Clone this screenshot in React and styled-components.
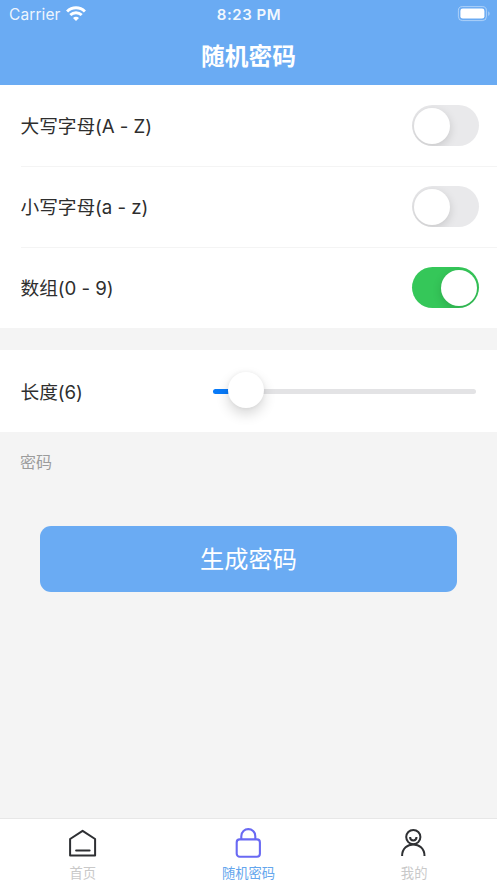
import React, { useState } from "react";
import styled, { createGlobalStyle } from "styled-components";

const GlobalStyle = createGlobalStyle`
  *, *::before, *::after { box-sizing: border-box; }
  body {
    margin: 0;
    background: #f4f4f4;
    font-family: Inter, "Noto Sans CJK SC", sans-serif;
  }
`;

const Screen = styled.div`
  display: flex;
  flex-direction: column;
  width: 497px;
  height: 883px;
  overflow: hidden;
  background: #f4f4f4;
  color: #2e2e2e;
`;

const Header = styled.header`
  height: 85px;
  flex: none;
  background: #6aabf3;
  color: #fff;
`;

const StatusBar = styled.div`
  display: grid;
  grid-template-columns: 1fr auto 1fr;
  align-items: center;
  height: 27px;
  padding: 0 7px 0 9px;
  font-size: 15.5px;
  line-height: 25px;
`;

const Carrier = styled.div`
  display: flex;
  align-items: center;
  gap: 5px;
  padding-top: 2px;
  letter-spacing: 0.1px;
  color: rgba(255, 255, 255, 0.9);

  svg { margin-top: -1px; }
`;

const Clock = styled.div`
  font-weight: 600;
  letter-spacing: 0.55px;
  font-size: 15px;
  padding: 2px 1px 0 0;
  color: rgba(255, 255, 255, 0.93);
`;

const BatterySlot = styled.div`
  display: flex;
  justify-content: flex-end;
`;

const Title = styled.h1`
  margin: 0;
  height: 58px;
  padding-top: 1px;
  font-size: 23.7px;
  font-weight: 700;
  line-height: 58px;
  text-align: center;
`;

const Group = styled.section`
  flex: none;
  background: #fff;
  margin-bottom: ${(p) => p.$gap || 0}px;
`;

const Row = styled.div`
  display: flex;
  align-items: center;
  justify-content: space-between;
  height: ${(p) => p.$height || 81}px;
  margin-left: 20.5px;
  padding-right: ${(p) => p.$right || 18}px;
  box-shadow: ${(p) => (p.$divided ? "0 1px 0 #f4f4f4" : "none")};
`;

const Label = styled.span`
  padding-top: 3px;
  font-size: 18.7px;
  line-height: 28px;
  letter-spacing: -0.05px;
  white-space: pre;
`;

const Toggle = styled.button`
  display: flex;
  justify-content: ${(p) => (p.$on ? "flex-end" : "flex-start")};
  align-items: center;
  width: 67.5px;
  height: 41px;
  margin: 0;
  padding: 0 2.5px;
  border: 0;
  border-radius: 21px;
  overflow: hidden;
  background: ${(p) => (p.$on ? "#35c759" : "#e9e9eb")};
`;

const Knob = styled.span`
  width: 36px;
  height: 36px;
  border-radius: 50%;
  background: #fff;
  box-shadow: 0 3px 10px rgba(0, 0, 0, 0.15);
`;

const Slider = styled.div`
  display: flex;
  align-items: center;
  width: 263px;
  height: 40px;
`;

const Track = styled.span`
  flex: ${(p) => (p.$filled ? "0 0 33px" : "1")};
  height: 5px;
  margin-top: 1px;
  border-radius: ${(p) => (p.$filled ? "3px 0 0 3px" : "0 3px 3px 0")};
  background: ${(p) => (p.$filled ? "#087af8" : "#e3e3e5")};
`;

const Thumb = styled.span`
  flex: none;
  z-index: 1;
  width: 36px;
  height: 36px;
  margin: -2px -18px 0;
  border-radius: 50%;
  background: #fff;
  box-shadow: 0 6px 13px rgba(0, 0, 0, 0.16), 0 0 4px rgba(0, 0, 0, 0.06);
`;

const Main = styled.main`
  flex: 1;
`;

const Caption = styled.p`
  margin: 0;
  padding: 18px 20px 0;
  font-size: 16px;
  line-height: 24px;
  color: #9c9c9c;
`;

const GenerateButton = styled.button`
  display: block;
  width: 417px;
  height: 66px;
  margin: 51.5px auto 0;
  padding: 2px 0 0;
  border: 0;
  border-radius: 11px;
  background: #6aabf3;
  color: #fff;
  font: 400 24.2px/64px Inter, "Noto Sans CJK SC", sans-serif;
`;

const TabBar = styled.nav`
  display: grid;
  grid-template-columns: repeat(3, 1fr);
  height: 65px;
  flex: none;
  border-top: 1px solid #e7e7e7;
  background: #fff;
`;

const Tab = styled.div`
  display: flex;
  flex-direction: column;
  align-items: center;
  padding-top: 9px;
  font-size: 13.3px;
  line-height: 20px;
  color: ${(p) => (p.$active ? "#64a6ed" : "#c9c9c9")};

  svg { display: block; margin-bottom: 5px; }
`;

const WifiIcon = () => (
  <svg width="20" height="16" viewBox="0 0 20 16" fill="none" stroke="#fff" strokeWidth="3">
    <path d="M1.1 5.5 C6.2 .6 13.8 .6 18.9 5.5" />
    <path d="M4.3 9 C7.6 5.9 12.4 5.9 15.7 9" />
    <path d="M7 11.9 C8.7 10.3 11.3 10.3 13 11.9 L10 15 Z" fill="#fff" stroke="none" />
  </svg>
);

const BatteryIcon = () => (
  <svg width="33" height="16" viewBox="0 0 33 16" fill="none">
    <rect x="1.4" y=".6" width="28" height="14" rx="4" stroke="#fff" strokeOpacity=".45" />
    <rect x="3.4" y="2.6" width="24" height="10" rx="2.3" fill="#fff" />
    <path d="M31.3 5.2 C33 6.2 33 9 31.3 10 Z" fill="#fff" fillOpacity=".5" />
  </svg>
);

const HomeIcon = () => (
  <svg width="30" height="30" viewBox="0 0 30 30" fill="none" stroke="#2e3033" strokeWidth="2" strokeLinejoin="round" strokeLinecap="round">
    <path d="M14.6 2.8 L27.1 11 V27.5 H2.1 V11 Z" />
    <path d="M8.1 22.5 H21.6" />
  </svg>
);

const LockIcon = () => (
  <svg width="30" height="30" viewBox="0 0 30 30" fill="none" stroke="#6969f3" strokeWidth="2.1">
    <rect x="3.7" y="11.4" width="23.2" height="17.3" rx="3" />
    <path d="M8.3 11 V8.2 C8.3 -1.2 22.3 -1.2 22.3 8.2 V11" />
  </svg>
);

const PersonIcon = () => (
  <svg width="30" height="30" viewBox="0 0 30 30" fill="none" stroke="#2e3033" strokeWidth="2">
    <circle cx="14.3" cy="9.1" r="7.1" />
    <path d="M11.1 9 C11.1 13.6 17.5 13.6 17.5 9" />
    <path d="M3.1 28 C3.1 12.6 25.5 12.6 25.5 28" />
  </svg>
);

const OPTIONS = ["大写字母(A - Z)", "小写字母(a - z)", "数组(0 - 9)"];

export default function App() {
  const [enabled, setEnabled] = useState([false, false, true]);
  const toggle = (index) =>
    setEnabled((values) => values.map((on, i) => (i === index ? !on : on)));

  return (
    <>
      <GlobalStyle />
      <Screen>
        <Header>
          <StatusBar>
            <Carrier>Carrier<WifiIcon /></Carrier>
            <Clock>8:23 PM</Clock>
            <BatterySlot><BatteryIcon /></BatterySlot>
          </StatusBar>
          <Title>随机密码</Title>
        </Header>
        <Group $gap={22}>
          {OPTIONS.map((label, i) => (
            <Row key={label} $divided={i < 2}>
              <Label>{label}</Label>
              <Toggle $on={enabled[i]} onClick={() => toggle(i)}><Knob /></Toggle>
            </Row>
          ))}
        </Group>
        <Group>
          <Row $height={82} $right={21}>
            <Label>长度(6)</Label>
            <Slider><Track $filled /><Thumb /><Track /></Slider>
          </Row>
        </Group>
        <Main>
          <Caption>密码</Caption>
          <GenerateButton>生成密码</GenerateButton>
        </Main>
        <TabBar>
          <Tab><HomeIcon /><span>首页</span></Tab>
          <Tab $active><LockIcon /><span>随机密码</span></Tab>
          <Tab><PersonIcon /><span>我的</span></Tab>
        </TabBar>
      </Screen>
    </>
  );
}
